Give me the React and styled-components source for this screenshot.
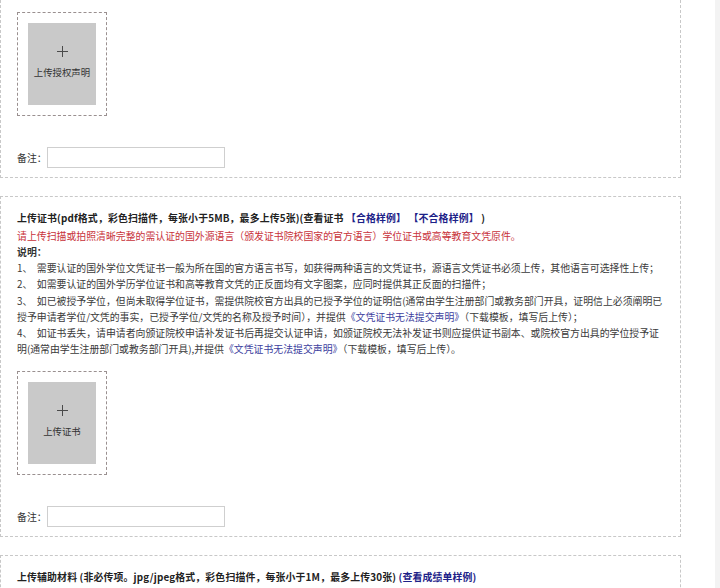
import React from "react";
import styled, { createGlobalStyle } from "styled-components";

const Global = createGlobalStyle`
  html, body { margin: 0; padding: 0; background: #fff; }
  body {
    font-family: "Microsoft YaHei", "Noto Sans CJK SC", "Noto Sans", sans-serif;
    font-size: 9.9px;
    color: #3a3a3a;
  }
`;

const Page = styled.div`
  display: flex;
  height: 588px;
  overflow: hidden;
`;

const Main = styled.div`
  width: 681px;
  display: flex;
  flex-direction: column;
  gap: 18px;
`;

const Strip = styled.div`
  margin-left: auto;
  width: 5px;
  background: #f3f3f3;
`;

const Panel = styled.section`
  box-sizing: border-box;
  width: 681px;
  border: 1px dashed #c8c8c8;
  border-top: ${(p) => (p.$cut ? "none" : "1px dashed #c8c8c8")};
  padding: ${(p) => (p.$cut ? "12px" : "13px")} 16px 9px 16px;
  flex-shrink: 0;
`;

const Title = styled.div`
  font-weight: bold;
  color: #222;
  line-height: 16px;
  margin-bottom: 2px;
  white-space: nowrap;
  letter-spacing: 0.15px;
`;

const Link = styled.span`
  color: ${(p) => (p.$soft ? "#3d3fa0" : "#1d2288")};
  font-weight: ${(p) => (p.$soft ? "normal" : "bold")};
`;

const Warn = styled.div`
  color: #c8323a;
  line-height: 16px;
  white-space: nowrap;
`;

const Note = styled.div`
  line-height: 16.2px;
  white-space: nowrap;
`;

const NoteHead = styled.div`
  font-weight: bold;
  color: #333;
`;

const Uploader = styled.div`
  margin-top: ${(p) => p.$top || 0}px;
  width: 68px;
  padding: 10px;
  border: 1px dashed #9a9090;
  box-sizing: content-box;
`;

const UploadTile = styled.div`
  width: 68px;
  height: 82px;
  background: #c9c9c9;
  display: flex;
  flex-direction: column;
  align-items: center;
  justify-content: center;
  color: #333;
`;

const PlusIcon = styled.svg`
  display: block;
  margin-top: -4px;
  margin-bottom: 8px;
`;

const TileText = styled.div`
  font-size: 9.4px;
  white-space: nowrap;
`;

const RemarkRow = styled.div`
  display: flex;
  align-items: center;
  margin-top: 31px;
`;

const RemarkLabel = styled.label`
  width: 30px;
  color: #333;
`;

const RemarkInput = styled.input`
  box-sizing: border-box;
  width: 178px;
  height: 21px;
  border: 1px solid #cfcfcf;
  padding: 0 4px;
  margin: 0;
  outline: none;
`;

function Upload({ label, top }) {
  return (
    <Uploader $top={top}>
      <UploadTile>
        <PlusIcon width="11" height="11" viewBox="0 0 11 11">
          <path d="M5.5 0v11M0 5.5h11" stroke="#4a4a4a" strokeWidth="1" fill="none" />
        </PlusIcon>
        <TileText>{label}</TileText>
      </UploadTile>
    </Uploader>
  );
}

function Remark() {
  return (
    <RemarkRow>
      <RemarkLabel>备注：</RemarkLabel>
      <RemarkInput type="text" />
    </RemarkRow>
  );
}

export default function App() {
  return (
    <>
      <Global />
      <Page>
        <Main>
          <Panel $cut>
            <Upload label="上传授权声明" />
            <Remark />
          </Panel>
          <Panel>
            <Title>
              上传证书(pdf格式，彩色扫描件，每张小于5MB，最多上传5张)(查看证书{" "}
              <Link>【合格样例】</Link> <Link>【不合格样例】</Link> )
            </Title>
            <Warn>
              请上传扫描或拍照清晰完整的需认证的国外源语言（颁发证书院校国家的官方语言）学位证书或高等教育文凭原件。
            </Warn>
            <Note>
              <NoteHead>说明：</NoteHead>
              1、&nbsp;&nbsp;需要认证的国外学位文凭证书一般为所在国的官方语言书写，如获得两种语言的文凭证书，源语言文凭证书必须上传，其他语言可选择性上传；
              <br />
              2、&nbsp;&nbsp;如需要认证的国外学历学位证书和高等教育文凭的正反面均有文字图案，应同时提供其正反面的扫描件；
              <br />
              3、&nbsp;&nbsp;如已被授予学位，但尚未取得学位证书，需提供院校官方出具的已授予学位的证明信(通常由学生注册部门或教务部门开具，证明信上必须阐明已
              <br />
              授予申请者学位/文凭的事实，已授予学位/文凭的名称及授予时间），并提供
              <Link $soft>《文凭证书无法提交声明》</Link>（下载模板，填写后上传）；
              <br />
              4、&nbsp;&nbsp;如证书丢失，请申请者向颁证院校申请补发证书后再提交认证申请，如颁证院校无法补发证书则应提供证书副本、或院校官方出具的学位授予证
              <br />
              明(通常由学生注册部门或教务部门开具),并提供
              <Link $soft>《文凭证书无法提交声明》</Link>（下载模板，填写后上传）。
            </Note>
            <Upload label="上传证书" top={14} />
            <Remark />
          </Panel>
          <Panel>
            <Title>
              上传辅助材料 (非必传项。jpg/jpeg格式，彩色扫描件，每张小于1M，最多上传30张){" "}
              <Link>(查看成绩单样例)</Link>
            </Title>
          </Panel>
        </Main>
        <Strip />
      </Page>
    </>
  );
}
